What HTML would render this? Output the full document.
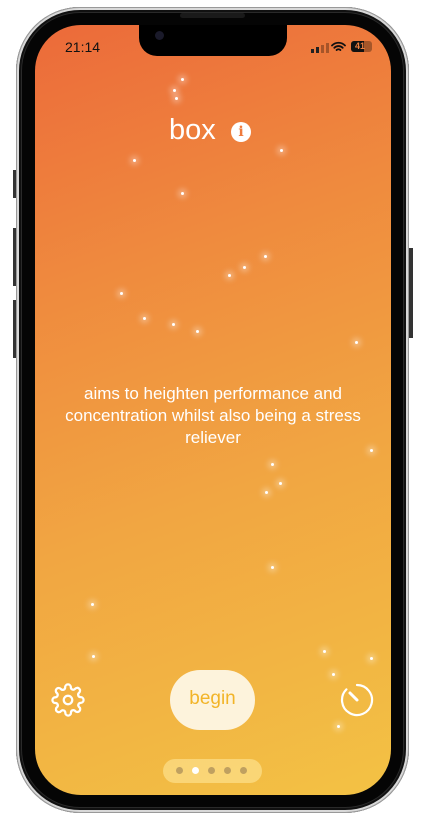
<!DOCTYPE html>
<html><head><style>
body{margin:0;width:425px;height:820px;background:#fff;position:relative;overflow:hidden;font-family:"Liberation Sans",sans-serif}
.outer{position:absolute;left:16px;top:7px;width:393px;height:806px;border-radius:64px;background:#2a2a2a;box-shadow:inset 0 0 0 1px #999,inset 0 0 0 3px #d8d8d8,inset 0 0 0 5px #111}
.inner{position:absolute;left:22px;top:13px;width:381px;height:794px;border-radius:58px;background:#050505}
.screen{position:absolute;left:35px;top:25px;width:356px;height:770px;border-radius:46px;overflow:hidden;background:linear-gradient(160deg,#ec6a3a 0%,#ef8a3e 30%,#f1a642 60%,#f3c244 100%)}
.notch{position:absolute;left:139px;top:25px;width:148px;height:31px;background:#000;border-radius:0 0 18px 18px}
.btn{position:absolute;background:#333;width:4px}
.s{position:absolute;width:3px;height:3px;border-radius:50%;background:#fff;box-shadow:0 0 6px 3px rgba(255,255,255,.35)}
</style></head><body>
<div class="btn" style="left:13px;top:170px;height:28px"></div>
<div class="btn" style="left:13px;top:228px;height:58px"></div>
<div class="btn" style="left:13px;top:300px;height:58px"></div>
<div class="btn" style="left:409px;top:248px;height:90px"></div>
<div class="outer"></div><div class="inner"></div>
<div class="screen">
<div style="position:absolute;left:30px;top:14px;font-size:14px;color:#111">21:14</div>
<div style="position:absolute;left:276px;top:18px;display:flex;gap:2px;align-items:flex-end">
<div style="width:3px;height:4px;background:#222"></div><div style="width:3px;height:6px;background:#222"></div><div style="width:3px;height:8px;background:rgba(0,0,0,.3)"></div><div style="width:3px;height:10px;background:rgba(0,0,0,.3)"></div></div>
<svg style="position:absolute;left:296px;top:16px" width="15" height="12" viewBox="0 0 15 12"><path d="M1 4.5a9 9 0 0 1 13 0M3.3 6.8a6 6 0 0 1 8.4 0M5.6 9a3 3 0 0 1 3.8 0" stroke="#111" stroke-width="1.8" fill="none" stroke-linecap="round"/></svg>
<div style="position:absolute;left:316px;top:16px;width:21px;height:11px;border-radius:3px;background:rgba(0,0,0,.3)"><div style="width:13px;height:11px;border-radius:3px 0 0 3px;background:#111"></div><span style="position:absolute;left:4px;top:0;font-size:9px;font-weight:bold;color:#f08040;line-height:11px">41</span></div>
<div style="position:absolute;left:134px;top:89px;font-size:29px;color:#fff">box</div>
<div style="position:absolute;left:196px;top:97px;width:20px;height:20px;border-radius:50%;background:#fff;color:#ef7a3c;font-weight:bold;font-size:14px;text-align:center;line-height:20px;font-family:'DejaVu Serif',serif">i</div>
<div style="position:absolute;left:10px;width:336px;top:358px;text-align:center;color:#fff;font-size:17px;line-height:22px">aims to heighten performance and concentration whilst also being a stress reliever</div>
<svg style="position:absolute;left:16px;top:658px" width="34" height="34" viewBox="0 0 24 24" fill="none" stroke="#fff" stroke-width="1.6" stroke-linejoin="round"><circle cx="12" cy="12" r="3"/><path d="M19.4 15a1.7 1.7 0 0 0 .3 1.8l.1.1a2 2 0 1 1-2.8 2.8l-.1-.1a1.7 1.7 0 0 0-1.8-.3 1.7 1.7 0 0 0-1 1.5V21a2 2 0 1 1-4 0v-.1a1.7 1.7 0 0 0-1.1-1.5 1.7 1.7 0 0 0-1.8.3l-.1.1a2 2 0 1 1-2.8-2.8l.1-.1a1.7 1.7 0 0 0 .3-1.8 1.7 1.7 0 0 0-1.5-1H3a2 2 0 1 1 0-4h.1a1.7 1.7 0 0 0 1.5-1.1 1.7 1.7 0 0 0-.3-1.8l-.1-.1a2 2 0 1 1 2.8-2.8l.1.1a1.7 1.7 0 0 0 1.8.3H9a1.7 1.7 0 0 0 1-1.5V3a2 2 0 1 1 4 0v.1a1.7 1.7 0 0 0 1 1.5 1.7 1.7 0 0 0 1.8-.3l.1-.1a2 2 0 1 1 2.8 2.8l-.1.1a1.7 1.7 0 0 0-.3 1.8V9a1.7 1.7 0 0 0 1.5 1H21a2 2 0 1 1 0 4h-.1a1.7 1.7 0 0 0-1.5 1z"/></svg>
<div style="position:absolute;left:135px;top:645px;width:85px;height:60px;border-radius:30px;background:#fdf3dc;color:#f2b428;font-size:19px;text-align:center;line-height:58px">begin</div>
<svg style="position:absolute;left:305px;top:658px" width="34" height="34" viewBox="0 0 34 34" fill="none" stroke="#fff" stroke-width="2.2" stroke-linecap="round"><path d="M17 2A15 15 0 1 1 6.4 6.4"/><path d="M10 10L17 17" stroke-width="3"/></svg>
<div style="position:absolute;left:128px;top:734px;width:99px;height:24px;border-radius:12px;background:rgba(255,235,160,.55)"></div>
<div style="position:absolute;left:141px;top:742px;display:flex;gap:9px">
<div style="width:7px;height:7px;border-radius:50%;background:#bfa060"></div><div style="width:7px;height:7px;border-radius:50%;background:#fff"></div><div style="width:7px;height:7px;border-radius:50%;background:#bfa060"></div><div style="width:7px;height:7px;border-radius:50%;background:#bfa060"></div><div style="width:7px;height:7px;border-radius:50%;background:#bfa060"></div></div>
<div class="s" style="left:146px;top:53px"></div><div class="s" style="left:138px;top:64px"></div><div class="s" style="left:140px;top:72px"></div>
<div class="s" style="left:98px;top:134px"></div><div class="s" style="left:146px;top:167px"></div><div class="s" style="left:245px;top:124px"></div>
<div class="s" style="left:208px;top:241px"></div><div class="s" style="left:193px;top:249px"></div><div class="s" style="left:229px;top:230px"></div>
<div class="s" style="left:85px;top:267px"></div><div class="s" style="left:108px;top:292px"></div><div class="s" style="left:137px;top:298px"></div><div class="s" style="left:161px;top:305px"></div>
<div class="s" style="left:320px;top:316px"></div><div class="s" style="left:335px;top:424px"></div><div class="s" style="left:236px;top:438px"></div><div class="s" style="left:244px;top:457px"></div><div class="s" style="left:230px;top:466px"></div>
<div class="s" style="left:56px;top:578px"></div><div class="s" style="left:57px;top:630px"></div><div class="s" style="left:236px;top:541px"></div><div class="s" style="left:297px;top:648px"></div><div class="s" style="left:335px;top:632px"></div><div class="s" style="left:288px;top:625px"></div><div class="s" style="left:302px;top:700px"></div>
</div>
<div class="notch"></div>
<div style="position:absolute;left:180px;top:13px;width:65px;height:5px;border-radius:3px;background:#1a1a1a"></div>
<div style="position:absolute;left:155px;top:31px;width:9px;height:9px;border-radius:50%;background:#1a1a2a"></div>
</body></html>
